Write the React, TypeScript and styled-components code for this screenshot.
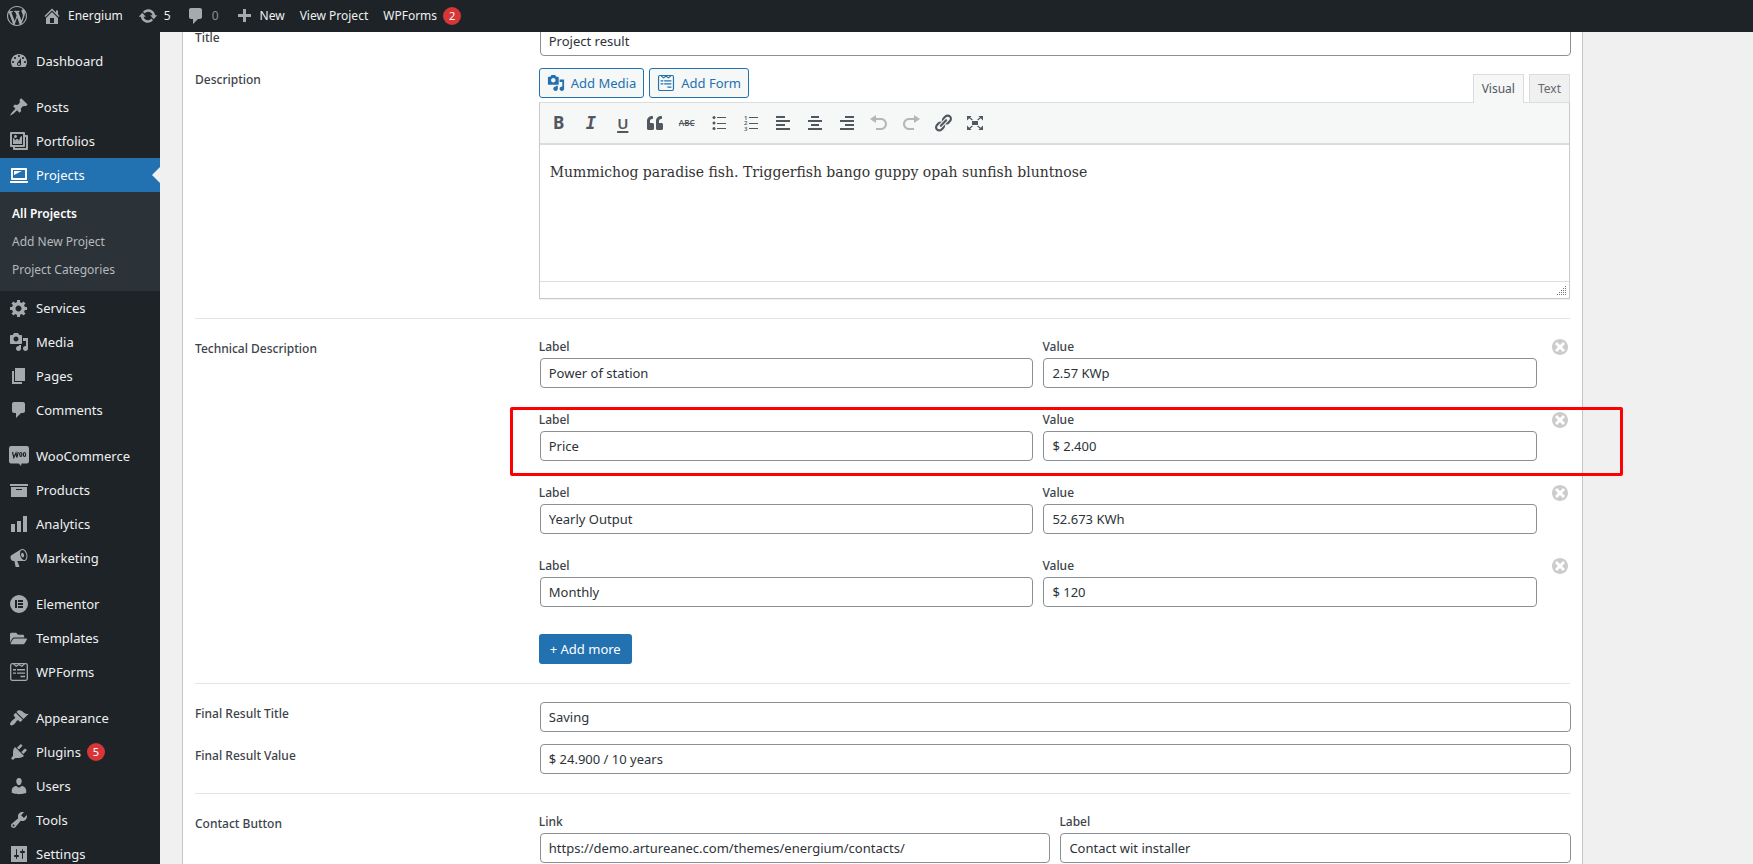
import React, { useId } from "react";
import styled, { createGlobalStyle, css } from "styled-components";
import { FaFolderOpen, FaQuoteLeft } from "react-icons/fa";

const GlobalStyle = createGlobalStyle`
  *, *::before, *::after { box-sizing: border-box; }
  body {
    margin: 0;
    background: #f0f0f1;
    color: #3c434a;
    font: 13px/20px "Noto Sans", "Open Sans", sans-serif;
  }
  button, input, textarea { font: inherit; color: inherit; margin: 0; }
  a { color: inherit; text-decoration: none; }
`;

/* ---------- icons (20 x 20 grid) ---------- */

const paths = {
  wordpress:
    "M20 10c0-5.51-4.49-10-10-10C4.48 0 0 4.49 0 10c0 5.52 4.48 10 10 10 5.51 0 10-4.48 10-10zM7.78 15.37L4.37 6.22c.55-.02 1.17-.08 1.17-.08.5-.06.44-1.13-.06-1.11 0 0-1.45.11-2.37.11-.18 0-.37 0-.58-.01C4.12 2.69 6.87 1.11 10 1.11c2.33 0 4.45.87 6.05 2.34-.68-.11-1.65.39-1.65 1.58 0 .74.45 1.36.9 2.1.35.61.55 1.36.55 2.46 0 1.49-1.4 5-1.4 5l-3.03-8.37c.54-.02.82-.17.82-.17.5-.05.44-1.25-.06-1.22 0 0-1.44.12-2.38.12-.87 0-2.33-.12-2.33-.12-.5-.03-.56 1.2-.06 1.22l.92.08 1.26 3.41zM17.41 10c.24-.64.74-1.87.43-4.25.7 1.29 1.05 2.71 1.05 4.25 0 3.29-1.73 6.24-4.4 7.78.97-2.59 1.94-5.2 2.92-7.78zM6.1 18.09C3.12 16.65 1.11 13.53 1.11 10c0-1.3.23-2.48.72-3.59C3.25 10.3 4.67 14.2 6.1 18.09zm4.03-6.63l2.58 6.98c-.86.29-1.76.45-2.71.45-.79 0-1.57-.11-2.29-.33.81-2.38 1.62-4.74 2.42-7.1z",
  home: "M16 8.5l1.53 1.53-1.06 1.06L10 4.6l-6.47 6.49-1.06-1.06L10 2.5l4 4v-2h2v4zm-6-2.46l6 5.99V18H4v-5.97zM12 17v-5H8v5h4z",
  update:
    "M10.2 3.28c3.53 0 6.43 2.61 6.92 6h2.08l-3.5 4-3.5-4h2.32c-.45-1.97-2.21-3.45-4.32-3.45-1.45 0-2.73.71-3.54 1.78L4.95 5.66C6.23 4.2 8.11 3.28 10.2 3.28zm-.4 13.44c-3.52 0-6.43-2.61-6.92-6H.8l3.5-4c1.17 1.33 2.33 2.67 3.5 4H5.48c.45 1.97 2.21 3.45 4.32 3.45 1.45 0 2.73-.71 3.54-1.78l1.71 1.95c-1.28 1.46-3.15 2.38-5.25 2.38z",
  comments:
    "M5 2h9c1.1 0 2 .9 2 2v7c0 1.1-.9 2-2 2h-2l-5 5v-5H5c-1.1 0-2-.9-2-2V4c0-1.1.9-2 2-2z",
  plus: "M17 8v3h-5v5H9v-5H4V8h5V3h3v5h5z",
  dashboard:
    "M3.76 16h12.48c1.1-1.37 1.76-3.11 1.76-5 0-4.42-3.58-8-8-8s-8 3.58-8 8c0 1.89.66 3.63 1.76 5zM10 4c.55 0 1 .45 1 1s-.45 1-1 1-1-.45-1-1 .45-1 1-1zM6 6c.55 0 1 .45 1 1s-.45 1-1 1-1-.45-1-1 .45-1 1-1zm8 0c.55 0 1 .45 1 1s-.45 1-1 1-1-.45-1-1 .45-1 1-1zm-5.37 5.55L12 7v6c0 1.1-.9 2-2 2s-2-.9-2-2c0-.57.24-1.08.63-1.45zM4 10c.55 0 1 .45 1 1s-.45 1-1 1-1-.45-1-1 .45-1 1-1zm12 0c.55 0 1 .45 1 1s-.45 1-1 1-1-.45-1-1 .45-1 1-1zm-5 3c0-.55-.45-1-1-1s-1 .45-1 1 .45 1 1 1 1-.45 1-1z",
  post: "M10.44 3.02l1.82-1.82 6.36 6.35-1.83 1.82c-1.05-.68-2.48-.57-3.41.36l-.75.75c-.92.93-1.04 2.35-.35 3.41l-1.83 1.82-2.41-2.41-2.8 2.79c-.42.42-3.38 2.71-3.8 2.29s1.86-3.39 2.28-3.81l2.79-2.79L4.1 9.36l1.83-1.82c1.05.69 2.48.57 3.4-.36l.75-.75c.93-.92 1.05-2.35.36-3.41z",
  gallery:
    "M16 4h1.96c.57 0 1.04.47 1.04 1.04v12.92c0 .57-.47 1.04-1.04 1.04H5.04C4.47 19 4 18.53 4 17.96V16H2.04C1.47 16 1 15.53 1 14.96V2.04C1 1.47 1.47 1 2.04 1h12.92c.57 0 1.04.47 1.04 1.04V4zM3 14h11V3H3v11zm5-8.5C8 4.67 7.33 4 6.5 4S5 4.67 5 5.5 5.67 7 6.5 7 8 6.33 8 5.5zm2 4.5s1-5 3-5v8H4V7c2 0 2 3 2 3s.33-2 2-2 2 2 2 2zm7 7V6h-1v8.96c0 .57-.47 1.04-1.04 1.04H6v1h11z",
  laptop:
    "M3 3h14c.6 0 1 .4 1 1v10c0 .6-.4 1-1 1H3c-.6 0-1-.4-1-1V4c0-.6.4-1 1-1zm13 2H4v8h12V5zm-3 1H5v4zm6 11v-1H1v1c0 .6.5 1 1.1 1h15.8c.6 0 1.1-.4 1.1-1z",
  generic:
    "M18 12h-2.18c-.17.7-.44 1.35-.81 1.93l1.54 1.54-2.1 2.1-1.54-1.54c-.58.36-1.23.63-1.91.79V19H8v-2.18c-.68-.16-1.33-.43-1.91-.79l-1.54 1.54-2.12-2.12 1.54-1.54c-.36-.58-.63-1.23-.79-1.91H1V9.03h2.17c.16-.7.44-1.35.8-1.94L2.43 5.55l2.1-2.1 1.54 1.54c.58-.37 1.24-.64 1.93-.81V2h3v2.18c.68.16 1.33.43 1.91.79l1.54-1.54 2.12 2.12-1.54 1.54c.36.59.64 1.24.8 1.94H18V12zm-8.5 1.5c1.66 0 3-1.34 3-3s-1.34-3-3-3-3 1.34-3 3 1.34 3 3 3z",
  media:
    "M13 11V4c0-.55-.45-1-1-1h-1.67L9 1H5L3.67 3H2c-.55 0-1 .45-1 1v7c0 .55.45 1 1 1h10c.55 0 1-.45 1-1zM7 4.5c1.38 0 2.5 1.12 2.5 2.5S8.38 9.5 7 9.5 4.5 8.38 4.5 7 5.62 4.5 7 4.5zM14 6h5v10.5c0 1.38-1.12 2.5-2.5 2.5S14 17.88 14 16.5s1.12-2.5 2.5-2.5c.17 0 .34.02.5.05V9h-3V6zm-4 8.05V13h2v3.5c0 1.38-1.12 2.5-2.5 2.5S7 17.88 7 16.5 8.12 14 9.5 14c.17 0 .34.02.5.05z",
  page: "M6 15V2h10v13H6zm-1 1h8v2H3V5h2v11z",
  archive: "M19 4v2H1V4h18zM2 7h16v10H2V7zm11 3V9H7v1h6z",
  chart: "M18 18V2h-4v16h4zm-6 0V7H8v11h4zm-6 0v-8H2v8h4z",
  megaphone:
    "M18.15 5.94c.46 1.62.38 3.22-.02 4.48-.42 1.28-1.26 2.18-2.3 2.48-.16.06-.26.06-.4.06-.06.02-.12.02-.18.02-.06.02-.14.02-.22.02h-6.8l2.22 5.5c.02.14-.06.26-.14.34-.08.1-.24.16-.34.16H6.95c-.1 0-.26-.06-.34-.16-.08-.08-.16-.2-.14-.34l-1-5.5H4.25l-.02-.02c-.5.06-1.08-.18-1.54-.62s-.88-1.08-1.06-1.88c-.24-.8-.2-1.56-.02-2.2.18-.62.58-1.08 1.06-1.3l.02-.02 9-5.4c.1-.06.18-.1.24-.16.06-.04.14-.08.24-.12.16-.08.28-.12.5-.18 1.04-.3 2.24.1 3.22.98s1.84 2.24 2.26 3.86zm-2.58 5.98h-.02c.4-.1.74-.34 1.04-.7.58-.7.86-1.76.86-3.04 0-.64-.1-1.3-.28-1.98-.34-1.36-1.02-2.5-1.78-3.24s-1.68-1.1-2.46-.88c-.82.22-1.4.96-1.7 2-.32 1.04-.28 2.36.06 3.72.38 1.36 1 2.5 1.8 3.24.78.74 1.62 1.1 2.48.88zm-2.54-7.08c.22-.04.42-.02.62.04.38.16.76.48 1.02 1s.42 1.2.42 1.78c0 .3-.04.56-.12.8-.18.48-.44.84-.86.94-.34.1-.8-.06-1.14-.4s-.64-.86-.78-1.5c-.18-.62-.12-1.24.02-1.72s.48-.84.82-.94z",
  appearance:
    "M14.48 11.06L7.41 3.99l1.5-1.5c.5-.56 2.3-.47 3.51.32 1.21.8 1.43 1.28 2.91 2.1 1.18.64 2.45 1.26 4.45.85zm-.71.71L6.7 4.7 4.93 6.47c-.39.39-.39 1.02 0 1.41l1.06 1.06c.39.39.39 1.03 0 1.42-.6.6-1.43 1.11-2.21 1.69-.35.26-.7.53-1.01.84C1.43 14.23.4 16.08 1.4 17.07c.99 1 2.84-.03 4.18-1.36.31-.31.58-.66.85-1.02.57-.78 1.08-1.61 1.69-2.21.39-.39 1.02-.39 1.41 0l1.06 1.06c.39.39 1.02.39 1.41 0z",
  plugins:
    "M13.11 4.36L9.87 7.6 8 5.73l3.24-3.24c.35-.34 1.05-.2 1.56.32.52.51.66 1.21.31 1.55zm-8 1.77l.91-1.12 9.01 9.01-1.19.84c-.71.71-2.63 1.16-3.82 1.16H6.14L4.9 17.26c-.59.59-1.54.59-2.12 0-.59-.58-.59-1.53 0-2.12l1.24-1.24v-3.88c0-1.13.4-3.19 1.09-3.89zm7.26 3.97l3.24-3.24c.34-.35 1.04-.21 1.55.31.52.51.66 1.21.31 1.55l-3.24 3.25z",
  users:
    "M10 9.25c-2.27 0-2.73-3.44-2.73-3.44C7 4.02 7.82 2 9.97 2c2.16 0 2.98 2.02 2.71 3.81 0 0-.41 3.44-2.68 3.44zm0 2.57L12.72 10c2.39 0 4.52 2.33 4.52 4.53v2.49s-3.65 1.13-7.24 1.13c-3.65 0-7.24-1.13-7.24-1.13v-2.49c0-2.25 1.94-4.48 4.47-4.48z",
  tools:
    "M16.68 9.77c-1.34 1.34-3.3 1.67-4.95.99l-5.41 6.52c-.99.99-2.59.99-3.58 0s-.99-2.59 0-3.57l6.52-5.42c-.68-1.65-.35-3.61.99-4.95 1.28-1.28 3.12-1.62 4.72-1.06l-2.89 2.89 2.82 2.82 2.86-2.87c.53 1.58.18 3.39-1.08 4.65zM3.81 16.21c.4.39 1.04.39 1.43 0 .4-.4.4-1.04 0-1.43-.39-.4-1.03-.4-1.43 0-.39.39-.39 1.03 0 1.43z",
  settings:
    "M18 18V2H2v16h16zM8 11h1c.55 0 1 .45 1 1s-.45 1-1 1H8v1.5c0 .28-.22.5-.5.5s-.5-.22-.5-.5V13H6c-.55 0-1-.45-1-1s.45-1 1-1h1V5.5c0-.28.22-.5.5-.5s.5.22.5.5V11zm5-2h-1c-.55 0-1-.45-1-1s.45-1 1-1h1V5.5c0-.28.22-.5.5-.5s.5.22.5.5V7h1c.55 0 1 .45 1 1s-.45 1-1 1h-1v5.5c0 .28-.22.5-.5.5s-.5-.22-.5-.5V9z",
  elementor:
    "M10 1a9 9 0 1 0 0 18a9 9 0 1 0 0-18zM6 6h2v8H6zM9 6h5v2H9zM9 9h5v2H9zM9 12h5v2H9z",
  dismiss:
    "M10 2c4.42 0 8 3.58 8 8s-3.58 8-8 8-8-3.58-8-8 3.58-8 8-8zm5 11l-3-3 3-3-2-2-3 3-3-3-2 2 3 3-3 3 2 2 3-3 3 3z",
  alignLeft: "M12 5V3H3v2h9zm5 4V7H3v2h14zm-5 4v-2H3v2h9zm5 4v-2H3v2h14z",
  alignCenter: "M14 5V3H6v2h8zm3 4V7H3v2h14zm-3 4v-2H6v2h8zm3 4v-2H3v2h14z",
  alignRight: "M17 5V3H8v2h9zm0 4V7H3v2h14zm0 4v-2H8v2h9zm0 4v-2H3v2h14z",
  undo: "M12 5H7V2L1 6l6 4V7h5c2.2 0 4 1.8 4 4s-1.8 4-4 4H7v2h5c3.3 0 6-2.7 6-6s-2.7-6-6-6z",
  redo: "M8 5h5V2l6 4-6 4V7H8c-2.2 0-4 1.8-4 4s1.8 4 4 4h5v2H8c-3.3 0-6-2.7-6-6s2.7-6 6-6z",
  link: "M17.74 2.76c1.68 1.69 1.68 4.41 0 6.1l-1.53 1.52c-1.12 1.12-2.7 1.47-4.14 1.09l2.62-2.61.76-.77.76-.76c.84-.84.84-2.2 0-3.04-.84-.85-2.2-.85-3.04 0l-.77.76-3.38 3.38c-.37-1.44-.02-3.02 1.1-4.14l1.52-1.53c1.69-1.68 4.42-1.68 6.1 0zM8.59 13.43l5.34-5.34c.42-.42.42-1.1 0-1.52-.44-.43-1.13-.39-1.53 0l-5.33 5.34c-.42.42-.42 1.1 0 1.52.44.43 1.13.39 1.52 0zm-.76 2.29l4.14-4.15c.38 1.44.03 3.02-1.09 4.14l-1.52 1.53c-1.69 1.68-4.41 1.68-6.1 0-1.68-1.68-1.68-4.42 0-6.1l1.53-1.52c1.12-1.12 2.7-1.47 4.14-1.1l-4.14 4.15c-.85.84-.85 2.2 0 3.05.84.84 2.2.84 3.04 0z",
  expand:
    "M7 8h6v4H7zM2 3h4.500L5.200 4.400l2.600 2.100-.8.900-2.700-2.200L2 7.500zM18 3v4.500l-2.300-2.300L13 7.400l-.8-.9 2.600-2.100L13.500 3zM2 17v-4.500l2.300 2.300L7 12.600l.8.900-2.600 2.100L6.500 17zM18 17h-4.500l1.300-1.400-2.600-2.100.8-.9 2.700 2.200 2.300-2.300z",
} as const;

type IconName = keyof typeof paths;

const Svg = styled.svg`
  display: block;
  flex: none;
  fill: currentColor;
`;

const Icon = ({ name, size = 20 }: { name: IconName; size?: number }) => (
  <Svg width={size} height={size} viewBox="0 0 20 20" fillRule="evenodd" aria-hidden="true">
    <path d={paths[name]} />
  </Svg>
);

const FormIcon = ({ size = 20 }: { size?: number }) => (
  <Svg width={size} height={size} viewBox="0 0 20 20" aria-hidden="true">
    <rect x="1.7" y="1.7" width="16.6" height="16.6" rx="1.5" fill="none" stroke="currentColor" strokeWidth="1.3" />
    <path d="M4.500 2l2.700 2.200L10 2.500l2.800 1.700L15.500 2" fill="none" stroke="currentColor" strokeWidth="1.200" />
    <path d="M4 7h3v1.400H4zM8 7h8v1.400H8zM4 10.400h3v1.400H4zM8 10.400h8v1.400H8zM11.500 13.800H16v1.500h-4.500z" />
  </Svg>
);

const WooIcon = () => (
  <Svg width={20} height={20} viewBox="0 0 20 20" aria-hidden="true">
    <path d="M2.200 0h15.600a2.200 2.200 0 0 1 2.200 2.200v13a2.200 2.200 0 0 1-2.200 2.200H12.500l-.5 2.600-2.200-2.600H2.200A2.200 2.200 0 0 1 0 15.200v-13A2.200 2.200 0 0 1 2.200 0z" />
    <path d="M3.500 6l1.300 5.500L7 7l.8 4.500L9.300 6" fill="none" stroke="#1d2327" strokeWidth="1.200" />
    <ellipse cx="11.800" cy="8.500" rx="1.100" ry="2" fill="none" stroke="#1d2327" strokeWidth="1.200" />
    <ellipse cx="15.500" cy="8.500" rx="1.100" ry="2" fill="none" stroke="#1d2327" strokeWidth="1.200" />
  </Svg>
);

const BulletListIcon = () => (
  <Svg width={20} height={20} viewBox="0 0 20 20" aria-hidden="true">
    <circle cx="5" cy="4.500" r="1.500" />
    <circle cx="5" cy="10" r="1.500" />
    <circle cx="5" cy="15.500" r="1.500" />
    <path d="M8 4h9v1H8zM8 10h9v1H8zM8 15h9v1H8z" />
  </Svg>
);

const NumberListIcon = () => (
  <Svg width={20} height={20} viewBox="0 0 20 20" aria-hidden="true">
    <g fontSize="6" fontWeight="600">
      <text x="3" y="7">1</text>
      <text x="3" y="12">2</text>
      <text x="3" y="18">3</text>
    </g>
    <path d="M8 4h9v1H8zM8 10h9v1H8zM8 15h9v1H8z" />
  </Svg>
);

/* ---------- frame ---------- */

const Page = styled.div`
  display: flex;
  flex-direction: column;
  height: 100vh;
  overflow: hidden;
`;

const AdminBar = styled.header`
  display: flex;
  flex: none;
  align-items: center;
  gap: 15px;
  height: 32px;
  padding: 0 7px;
  background: #1d2327;
  color: #f0f0f1;
  font-size: 12px;
  z-index: 2;
`;

const BarLink = styled.a<{ $muted?: boolean }>`
  display: flex;
  align-items: center;
  gap: 6px;
  color: ${(p) => (p.$muted ? "#8c8f94" : "#f0f0f1")};
  white-space: nowrap;
  svg { color: #a7aaad; }
`;

const Badge = styled.span`
  display: grid;
  place-items: center;
  width: 18px;
  height: 18px;
  border-radius: 9px;
  background: #d63638;
  color: #fff;
  font-size: 11px;
  line-height: 18px;
`;

const Body = styled.div`
  display: flex;
  flex: 1;
  min-height: 0;
`;

const Sidebar = styled.nav`
  flex: none;
  width: 160px;
  overflow: hidden;
  background: #1d2327;
`;

const MenuGroup = styled.ul`
  list-style: none;
  margin: 0;
  padding: 12px 0 0;
`;

const MenuLink = styled.a<{ $current?: boolean }>`
  position: relative;
  display: flex;
  align-items: center;
  gap: 6px;
  height: 34px;
  padding-left: 7px;
  color: #f0f0f1;
  svg { color: #a7aaad; }
  ${(p) =>
    p.$current &&
    css`
      background: #2271b1;
      color: #fff;
      svg { color: #fff; }
      &::after {
        content: "";
        position: absolute;
        right: 0;
        top: 9px;
        border: 8px solid transparent;
        border-left-width: 0;
        border-right-color: #f0f0f1;
      }
    `}
`;

const MenuIcon = styled.span`
  display: grid;
  place-items: center;
  width: 23px;
`;

const SubMenu = styled.ul`
  list-style: none;
  margin: 0;
  padding: 8px 0 7px;
  background: #2c3338;
`;

const SubLink = styled.a<{ $current?: boolean }>`
  display: block;
  padding: 4px 12px;
  font-size: 12px;
  color: ${(p) => (p.$current ? "#fff" : "#b4b9be")};
  font-weight: ${(p) => (p.$current ? 600 : 400)};
`;

const Main = styled.main`
  flex: 1;
  min-width: 0;
  padding: 0 170px 0 22px;
  overflow: hidden;
`;

/* The page is scrolled a little, so the first row starts under the bar. */
const Panel = styled.form`
  margin-top: -25px;
  padding: 0 12px 20px;
  border: 1px solid #c3c4c7;
  background: #fff;
`;

const Section = styled.section`
  display: grid;
  gap: 12px;
  padding: 18px 0 19px;
  & + & { border-top: 1px solid #e2e4e7; }
`;

const Row = styled.div`
  display: grid;
  grid-template-columns: 25% minmax(0, 1fr);
  align-items: start;
`;

const RowLabel = styled.label`
  padding-top: 2px;
  font-size: 12px;
  font-weight: 500;
`;

const FieldLabel = styled.label`
  display: block;
  margin-bottom: 1px;
  font-size: 12px;
  font-weight: 500;
`;

const TextInput = styled.input`
  display: block;
  width: 100%;
  height: 30px;
  margin-left: 1px;
  padding: 0 8px;
  border: 1px solid #8c8f94;
  border-radius: 4px;
  background: #fff;
  color: #2c3338;
`;

const Pair = styled.div<{ $removable?: boolean }>`
  position: relative;
  display: grid;
  grid-template-columns: ${(p) => (p.$removable ? "1fr 1fr 24px" : "1fr 1fr")};
  column-gap: 10px;
`;

const PairList = styled.div`
  display: grid;
  gap: 22px;
  margin-bottom: 27px;
`;

const RemoveButton = styled.button`
  justify-self: end;
  align-self: start;
  padding: 0;
  border: 0;
  background: none;
  color: #ccc;
`;

const Highlight = styled.div`
  position: absolute;
  inset: -3px -53px -15px -29px;
  border: 3px solid #f00;
  border-radius: 2px;
  pointer-events: none;
`;

const PrimaryButton = styled.button`
  height: 30px;
  padding: 0 11px;
  border: 0;
  border-radius: 3px;
  background: #2271b1;
  color: #fff;
`;

/* ---------- editor ---------- */

const EditorHead = styled.div`
  display: flex;
  align-items: flex-end;
  justify-content: space-between;
  height: 34px;
`;

const MediaButtons = styled.div`
  display: flex;
  align-self: flex-start;
  gap: 5px;
`;

const MediaButton = styled.button`
  display: flex;
  align-items: center;
  gap: 6px;
  height: 30px;
  padding: 0 7px;
  border: 1px solid #2271b1;
  border-radius: 3px;
  background: #f6f7f7;
  color: #2271b1;
`;

const Tabs = styled.div`
  display: flex;
  gap: 5px;
`;

const Tab = styled.button<{ $active?: boolean }>`
  height: ${(p) => (p.$active ? 29 : 28)}px;
  margin-bottom: ${(p) => (p.$active ? -1 : 0)}px;
  padding: 0 8px;
  border: 1px solid #dcdcde;
  border-bottom: 0;
  background: ${(p) => (p.$active ? "#f6f7f7" : "#f0f0f1")};
  color: ${(p) => (p.$active ? "#50575e" : "#646970")};
  font-size: 12px;
  z-index: 1;
`;

const EditorBox = styled.div`
  border: 1px solid #c8cacc;
  border-top-color: #dcdcde;
  box-shadow: 0 1px 1px rgba(0, 0, 0, 0.06);
`;

const Toolbar = styled.div`
  display: flex;
  align-items: center;
  height: 42px;
  padding-left: 3px;
  border-bottom: 2px solid #dcdcde;
  background: #f6f7f7;
`;

const ToolButton = styled.button<{ $look?: "bold" | "italic" | "underline" | "strike"; $off?: boolean }>`
  display: grid;
  place-items: center;
  width: 32px;
  height: 28px;
  padding: 0;
  border: 0;
  background: none;
  color: ${(p) => (p.$off ? "#b4b6b9" : "#50575e")};
  font-size: 17px;
  font-weight: 700;
  ${(p) => p.$look === "italic" && css`font-family: "DejaVu Sans Mono", monospace; font-style: italic;`}
  ${(p) => p.$look === "underline" && css`font-size: 15px; font-weight: 600; text-decoration: underline; text-decoration-thickness: 2px; text-underline-offset: 2px;`}
  ${(p) => p.$look === "strike" && css`font-size: 8px; font-weight: 600; text-decoration: line-through;`}
`;

const EditorText = styled.textarea`
  display: block;
  width: 100%;
  height: 136px;
  padding: 15px 10px;
  border: 0;
  outline: 0;
  resize: none;
  color: #333;
  font: 14px/24px "DejaVu Serif", serif;
`;

const StatusBar = styled.div`
  display: flex;
  justify-content: flex-end;
  height: 17px;
  padding: 4px 3px;
  border-top: 1px solid #dcdcde;
  color: #787c82;
`;

const ResizeGrip = () => (
  <Svg width={10} height={10} viewBox="0 0 10 10" shapeRendering="crispEdges" aria-hidden="true">
    {[0, 1, 2, 3, 4].flatMap((row) =>
      Array.from({ length: row + 1 }, (_, i) => (
        <rect key={`${row}-${i}`} x={9 - i * 2} y={row * 2} width="1" height="1" />
      ))
    )}
  </Svg>
);

/* ---------- pieces ---------- */

type MenuEntry = {
  label: string;
  icon: React.ReactNode;
  badge?: number;
  children?: string[];
};

const menu: MenuEntry[][] = [
  [{ label: "Dashboard", icon: <Icon name="dashboard" /> }],
  [
    { label: "Posts", icon: <Icon name="post" /> },
    { label: "Portfolios", icon: <Icon name="gallery" /> },
    {
      label: "Projects",
      icon: <Icon name="laptop" />,
      children: ["All Projects", "Add New Project", "Project Categories"],
    },
    { label: "Services", icon: <Icon name="generic" /> },
    { label: "Media", icon: <Icon name="media" /> },
    { label: "Pages", icon: <Icon name="page" /> },
    { label: "Comments", icon: <Icon name="comments" /> },
  ],
  [
    { label: "WooCommerce", icon: <WooIcon /> },
    { label: "Products", icon: <Icon name="archive" /> },
    { label: "Analytics", icon: <Icon name="chart" /> },
    { label: "Marketing", icon: <Icon name="megaphone" /> },
  ],
  [
    { label: "Elementor", icon: <Icon name="elementor" /> },
    { label: "Templates", icon: <FaFolderOpen size={17} /> },
    { label: "WPForms", icon: <FormIcon /> },
  ],
  [
    { label: "Appearance", icon: <Icon name="appearance" /> },
    { label: "Plugins", icon: <Icon name="plugins" />, badge: 5 },
    { label: "Users", icon: <Icon name="users" /> },
    { label: "Tools", icon: <Icon name="tools" /> },
    { label: "Settings", icon: <Icon name="settings" /> },
  ],
];

const specs = [
  ["Power of station", "2.57 KWp"],
  ["Price", "$ 2.400"],
  ["Yearly Output", "52.673 KWh"],
  ["Monthly", "$ 120"],
];

const Field = ({ label, value }: { label: string; value: string }) => {
  const id = useId();
  return (
    <div>
      <FieldLabel htmlFor={id}>{label}</FieldLabel>
      <TextInput id={id} type="text" defaultValue={value} />
    </div>
  );
};

const TextRow = ({ label, value }: { label: string; value: string }) => {
  const id = useId();
  return (
    <Row>
      <RowLabel htmlFor={id}>{label}</RowLabel>
      <TextInput id={id} type="text" defaultValue={value} />
    </Row>
  );
};

const Editor = () => (
  <div>
    <EditorHead>
      <MediaButtons>
        <MediaButton type="button"><Icon name="media" size={18} />Add Media</MediaButton>
        <MediaButton type="button"><FormIcon size={18} />Add Form</MediaButton>
      </MediaButtons>
      <Tabs>
        <Tab type="button" $active>Visual</Tab>
        <Tab type="button">Text</Tab>
      </Tabs>
    </EditorHead>
    <EditorBox>
      <Toolbar>
        <ToolButton type="button" aria-label="Bold" $look="bold">B</ToolButton>
        <ToolButton type="button" aria-label="Italic" $look="italic">I</ToolButton>
        <ToolButton type="button" aria-label="Underline" $look="underline">U</ToolButton>
        <ToolButton type="button" aria-label="Blockquote"><FaQuoteLeft size={16} /></ToolButton>
        <ToolButton type="button" aria-label="Strikethrough" $look="strike">ABC</ToolButton>
        <ToolButton type="button" aria-label="Bulleted list"><BulletListIcon /></ToolButton>
        <ToolButton type="button" aria-label="Numbered list"><NumberListIcon /></ToolButton>
        <ToolButton type="button" aria-label="Align left"><Icon name="alignLeft" /></ToolButton>
        <ToolButton type="button" aria-label="Align center"><Icon name="alignCenter" /></ToolButton>
        <ToolButton type="button" aria-label="Align right"><Icon name="alignRight" /></ToolButton>
        <ToolButton type="button" aria-label="Undo" $off><Icon name="undo" /></ToolButton>
        <ToolButton type="button" aria-label="Redo" $off><Icon name="redo" /></ToolButton>
        <ToolButton type="button" aria-label="Insert link"><Icon name="link" /></ToolButton>
        <ToolButton type="button" aria-label="Fullscreen"><Icon name="expand" /></ToolButton>
      </Toolbar>
      <EditorText
        id="description"
        spellCheck={false}
        defaultValue="Mummichog paradise fish. Triggerfish bango guppy opah sunfish bluntnose"
      />
      <StatusBar><ResizeGrip /></StatusBar>
    </EditorBox>
  </div>
);

export default function App() {
  return (
    <Page>
      <GlobalStyle />
      <AdminBar>
        <BarLink href="#" aria-label="WordPress"><Icon name="wordpress" /></BarLink>
        <BarLink href="#"><Icon name="home" />Energium</BarLink>
        <BarLink href="#"><Icon name="update" />5</BarLink>
        <BarLink href="#" $muted><Icon name="comments" />0</BarLink>
        <BarLink href="#"><Icon name="plus" />New</BarLink>
        <BarLink href="#">View Project</BarLink>
        <BarLink href="#">WPForms<Badge>2</Badge></BarLink>
      </AdminBar>
      <Body>
        <Sidebar>
          {menu.map((group) => (
            <MenuGroup key={group[0].label}>
              {group.map((item) => (
                <li key={item.label}>
                  <MenuLink href="#" $current={!!item.children}>
                    <MenuIcon>{item.icon}</MenuIcon>
                    {item.label}
                    {item.badge && <Badge>{item.badge}</Badge>}
                  </MenuLink>
                  {item.children && (
                    <SubMenu>
                      {item.children.map((child, i) => (
                        <li key={child}><SubLink href="#" $current={i === 0}>{child}</SubLink></li>
                      ))}
                    </SubMenu>
                  )}
                </li>
              ))}
            </MenuGroup>
          ))}
        </Sidebar>
        <Main>
          <Panel>
            <Section>
              <TextRow label="Title" value="Project result" />
              <Row>
                <RowLabel htmlFor="description">Description</RowLabel>
                <Editor />
              </Row>
            </Section>
            <Section>
              <Row>
                <RowLabel as="span">Technical Description</RowLabel>
                <div>
                  <PairList>
                    {specs.map(([label, value]) => (
                      <Pair key={label} $removable>
                        <Field label="Label" value={label} />
                        <Field label="Value" value={value} />
                        <RemoveButton type="button" aria-label={`Remove ${label}`}>
                          <Icon name="dismiss" />
                        </RemoveButton>
                        {label === "Price" && <Highlight />}
                      </Pair>
                    ))}
                  </PairList>
                  <PrimaryButton type="button">+ Add more</PrimaryButton>
                </div>
              </Row>
            </Section>
            <Section>
              <TextRow label="Final Result Title" value="Saving" />
              <TextRow label="Final Result Value" value="$ 24.900 / 10 years" />
            </Section>
            <Section>
              <Row>
                <RowLabel as="span">Contact Button</RowLabel>
                <Pair>
                  <Field label="Link" value="https://demo.artureanec.com/themes/energium/contacts/" />
                  <Field label="Label" value="Contact wit installer" />
                </Pair>
              </Row>
            </Section>
          </Panel>
        </Main>
      </Body>
    </Page>
  );
}
